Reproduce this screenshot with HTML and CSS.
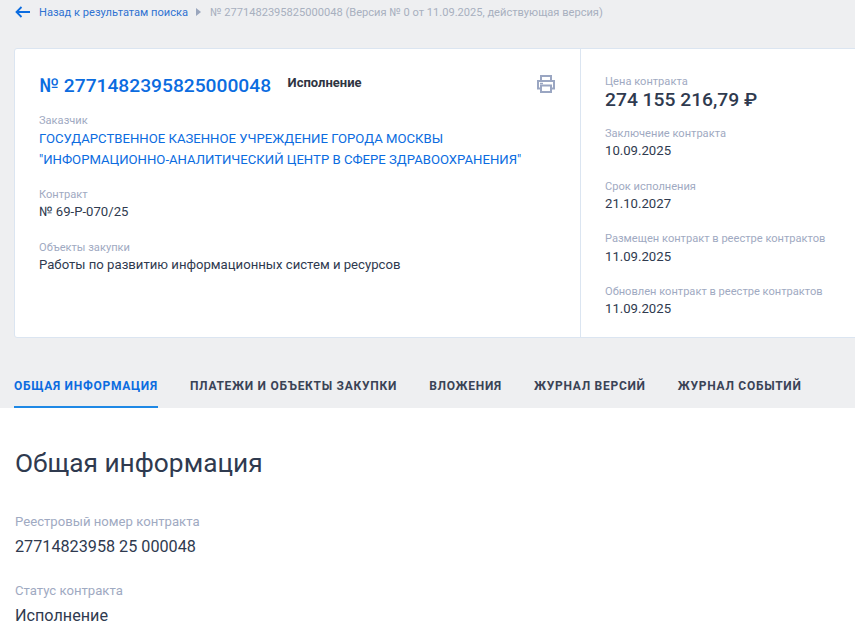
FILE: index.html
```html
<!DOCTYPE html>
<html lang="ru">
<head>
<meta charset="utf-8">
<title>Контракт</title>
<link rel="stylesheet" href="styles.css">
</head>
<body>
<div class="top">
  <nav class="crumbs">
    <a class="back" href="#">
      <svg class="back-icon" width="15" height="12" viewBox="0 0 15 12"><path d="M15 6H1.500M6.500 1 1.500 6l5 5" fill="none" stroke="#0b6ce0" stroke-width="1.800"/></svg>
      <span>Назад к результатам поиска</span>
    </a>
    <svg class="sep" width="5" height="8" viewBox="0 0 5 8"><path d="M0 0l5 4-5 4z" fill="#9aa6bd"/></svg>
    <span class="current">№ 2771482395825000048 (Версия № 0 от 11.09.2025, действующая версия)</span>
  </nav>
  <section class="card">
    <div class="main">
      <div class="head">
        <h1 class="num">№ 2771482395825000048</h1>
        <span class="status">Исполнение</span>
        <svg class="print" width="18" height="18" viewBox="0 0 18 18" fill="none" stroke="#9aa6c2" stroke-width="2"><path d="M4 6V1h10v5M4 13.500H1V6h16v7.500h-3"/><path d="M4 10.500h10V17H4z"/><path d="M3 8.500h3" stroke-width="1.500"/></svg>
      </div>
      <div class="field first"><div class="lbl">Заказчик</div><a class="org" href="#">ГОСУДАРСТВЕННОЕ КАЗЕННОЕ УЧРЕЖДЕНИЕ ГОРОДА МОСКВЫ<br>"ИНФОРМАЦИОННО-АНАЛИТИЧЕСКИЙ ЦЕНТР В СФЕРЕ ЗДРАВООХРАНЕНИЯ"</a></div>
      <div class="field"><div class="lbl">Контракт</div><div class="val">№ 69-Р-070/25</div></div>
      <div class="field"><div class="lbl">Объекты закупки</div><div class="val">Работы по развитию информационных систем и ресурсов</div></div>
    </div>
    <aside class="side">
      <div class="item price"><div class="lbl">Цена контракта</div><div class="sum">274 155 216,79 ₽</div></div>
      <div class="item"><div class="lbl">Заключение контракта</div><div class="val">10.09.2025</div></div>
      <div class="item"><div class="lbl">Срок исполнения</div><div class="val">21.10.2027</div></div>
      <div class="item"><div class="lbl">Размещен контракт в реестре контрактов</div><div class="val">11.09.2025</div></div>
      <div class="item"><div class="lbl">Обновлен контракт в реестре контрактов</div><div class="val">11.09.2025</div></div>
    </aside>
  </section>
  <div class="tabs">
    <a class="tab active" href="#">ОБЩАЯ ИНФОРМАЦИЯ</a>
    <a class="tab" href="#">ПЛАТЕЖИ И ОБЪЕКТЫ ЗАКУПКИ</a>
    <a class="tab" href="#">ВЛОЖЕНИЯ</a>
    <a class="tab" href="#">ЖУРНАЛ ВЕРСИЙ</a>
    <a class="tab" href="#">ЖУРНАЛ СОБЫТИЙ</a>
  </div>
</div>
<main class="content">
  <h2 class="title">Общая информация</h2>
  <div class="info"><div class="info-lbl">Реестровый номер контракта</div><div class="info-val">27714823958 25 000048</div></div>
  <div class="info"><div class="info-lbl">Статус контракта</div><div class="info-val">Исполнение</div></div>
</main>
</body>
</html>
```
FILE: styles.css
```css
html, body { margin: 0; padding: 0; height: 633px; overflow: hidden; background: #fff; }
body { font-family: Roboto, "Liberation Sans", sans-serif; color: #2f3a4f; width: 855px; }
a { text-decoration: none; }
.top { background: #eeeff1; height: 408px; padding: 0 0 0 15px; box-sizing: border-box; display: flex; flex-direction: column; overflow: hidden; }
.crumbs { display: flex; align-items: center; height: 24px; font-size: 11.1px; white-space: nowrap; }
.back { display: flex; align-items: center; color: #2f72d2; }
.back-icon { margin-right: 9px; }
.sep { margin: 0 9px 0 8px; }
.current { color: #a8b0bf; }
.card { margin: 24px 0 0 -1px; height: 290px; width: 1000px; flex: none; box-sizing: border-box; display: flex; background: #fff; border: 1px solid #dbe5f1; border-radius: 3px; }
.main { width: 566px; flex: none; box-sizing: border-box; border-right: 1px solid #dbe5f1; padding: 25px 25px 0 24px; }
.head { display: flex; align-items: flex-start; height: 30px; position: relative; }
.num { margin: 0 0 0 .5px; font-size: 19.2px; line-height: 23px; font-weight: 500; color: #0b6ce0; white-space: nowrap; }
.status { margin-left: 16.5px; font-size: 13px; line-height: 18px; font-weight: 700; color: #2f3542; }
.print { position: absolute; right: 0; top: 1px; }
.lbl { font-size: 11.1px; line-height: 13px; color: #9faac2; white-space: nowrap; }
.val { font-size: 13.15px; line-height: 18px; color: #2f3a4f; white-space: nowrap; }
.field { margin-top: 17.5px; }
.field + .field + .field { margin-top: 20px; }
.field.first { margin-top: 10px; }
.field .val { margin-top: 2px; }
.org { display: block; color: #0b6ce0; font-size: 13.15px; line-height: 21px; margin-top: 1px; white-space: nowrap; }
.side { padding: 26px 0 0 24px; }
.item { margin-bottom: 19.6px; }
.item .val { margin-top: 2.2px; }
.price { margin-bottom: 15.9px; }
.sum { font-size: 19.25px; line-height: 23px; font-weight: 500; color: #2f3a4f; white-space: nowrap; }
.tabs { display: flex; gap: 32.1px; margin-top: 29px; height: 41px; flex: none; margin-left: -1px; }
.tab { font-size: 12px; font-weight: 700; letter-spacing: .72px; line-height: 38px; height: 41px; box-sizing: border-box; color: #3a4356; white-space: nowrap; }
.tab.active { color: #0b6ce0; border-bottom: 2px solid #1e88e5; }
.content { padding: 0 0 0 15px; }
.title { margin: 38px 0 0; font-size: 26.3px; line-height: 34px; font-weight: 400; color: #2f3a4f; }
.info { margin-top: 25px; }
.title + .info { margin-top: 33px; }
.info-lbl { font-size: 13.15px; line-height: 18px; color: #9faac2; }
.info-val { margin-top: 6px; font-size: 16.2px; line-height: 20px; color: #2f3a4f; }
```
